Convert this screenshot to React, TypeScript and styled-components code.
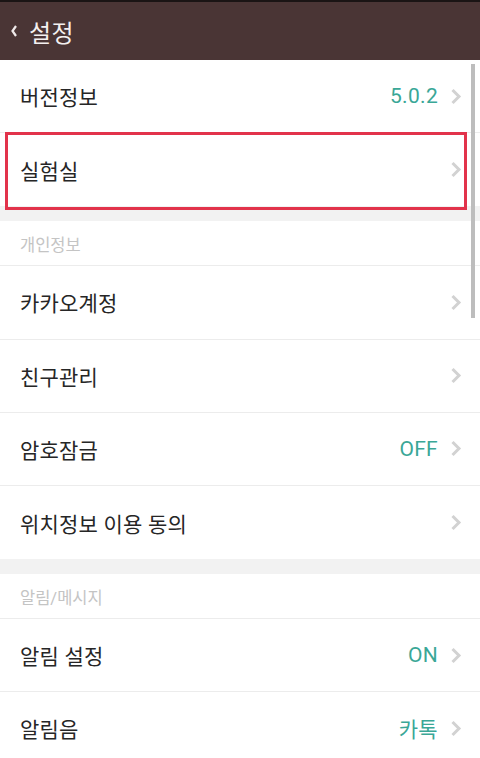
import React from "react";
import styled, { createGlobalStyle } from "styled-components";

const Global = createGlobalStyle`
  html, body { margin: 0; padding: 0; background: #fff; }
  body { font-family: Roboto, "Noto Sans CJK KR", "Noto Sans", sans-serif; }
  * { box-sizing: border-box; }
`;

const Screen = styled.div`
  position: relative;
  width: 480px;
  height: 758px;
  overflow: hidden;
  background: #fff;
  display: flex;
  flex-direction: column;
`;

const StatusStrip = styled.div`
  height: 2px;
  background: #1a1414;
  flex: none;
`;

const TopBar = styled.header`
  height: 58px;
  flex: none;
  background: #4a3535;
  display: flex;
  align-items: center;
  padding-left: 10px;
  gap: 11px;
  color: #fff;
`;

const Title = styled.h1`
  margin: 0;
  font-size: 24px;
  font-weight: 400;
  letter-spacing: 0.5px;
  color: #f4f0f0;
`;

const Row = styled.div<{ $last?: boolean }>`
  height: 73.2px;
  flex: none;
  display: flex;
  align-items: center;
  padding: 0 18px 0 20px;
  border-bottom: ${(p) => (p.$last ? "none" : "1px solid #ececec")};
`;

const Label = styled.span`
  flex: 1;
  font-size: 21px;
  font-weight: 400;
  color: #262626;
  letter-spacing: 0.2px;
`;

const Value = styled.span`
  font-family: Roboto, "Noto Sans CJK KR", sans-serif;
  font-size: 21px;
  font-weight: 400;
  color: #3aa797;
  margin-right: 12px;
  letter-spacing: 0.3px;
`;

const Gap = styled.div`
  height: 15px;
  flex: none;
  background: #f2f2f2;
`;

const SectionHead = styled.div`
  height: 45px;
  flex: none;
  display: flex;
  align-items: center;
  padding-left: 20px;
  padding-top: 2px;
  font-size: 16.5px;
  font-weight: 400;
  color: #c4c4c4;
  border-bottom: 1px solid #ececec;
`;

const Highlight = styled.div`
  position: absolute;
  left: 5px;
  top: 132px;
  width: 462px;
  height: 78px;
  border: 3px solid #e2334b;
  pointer-events: none;
`;

const ScrollThumb = styled.div`
  position: absolute;
  left: 471px;
  top: 64px;
  width: 4px;
  height: 254px;
  background: #bdbdbd;
`;

const Chevron = () => (
  <svg width="12" height="17" viewBox="0 0 12 17">
    <path d="M2.5 2 L9 8.5 L2.5 15" fill="none" stroke="#d2d2d2" strokeWidth="3" />
  </svg>
);

const Back = () => (
  <svg width="8" height="14" viewBox="0 0 8 14">
    <path d="M6 2 L2.5 7 L6 12" fill="none" stroke="#f0eaea" strokeWidth="2.2" />
  </svg>
);

type ItemProps = { label: string; value?: string; last?: boolean };

const Item = ({ label, value, last }: ItemProps) => (
  <Row $last={last}>
    <Label>{label}</Label>
    {value && <Value>{value}</Value>}
    <Chevron />
  </Row>
);

export default function App() {
  return (
    <>
      <Global />
      <Screen>
        <StatusStrip />
        <TopBar>
          <Back />
          <Title>설정</Title>
        </TopBar>
        <Item label="버전정보" value="5.0.2" />
        <Item label="실험실" last />
        <Gap />
        <SectionHead>개인정보</SectionHead>
        <Item label="카카오계정" />
        <Item label="친구관리" />
        <Item label="암호잠금" value="OFF" />
        <Item label="위치정보 이용 동의" last />
        <Gap />
        <SectionHead>알림/메시지</SectionHead>
        <Item label="알림 설정" value="ON" />
        <Item label="알림음" value="카톡" />
        <Highlight />
        <ScrollThumb />
      </Screen>
    </>
  );
}
